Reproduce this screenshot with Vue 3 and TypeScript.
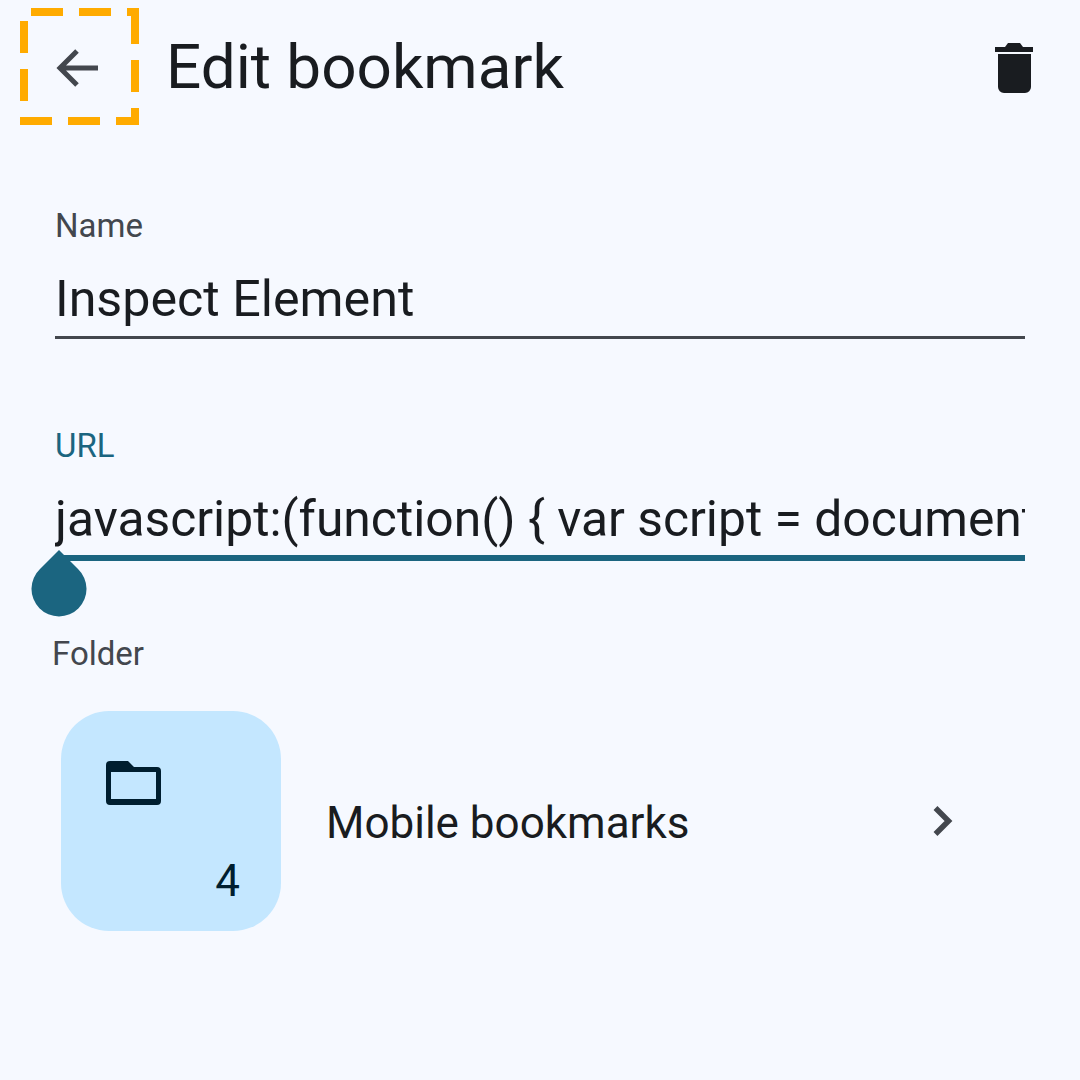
<script setup lang="ts">
const title: string = 'Edit bookmark'
</script>

<template>
  <div class="page">
    <header class="bar">
      <div class="back">
        <svg class="back-icon" viewBox="0 0 48 48" width="48" height="48">
          <path d="M45 24H9M24 7L7 24l17 17" fill="none" stroke="#43474e" stroke-width="5" />
        </svg>
        <svg class="dash" viewBox="0 0 119 117" width="119" height="117">
          <path d="M11 4h32M59 4h32M107 4h12M115 0v36M115 52v32M115 100v17M119 113H96M80 113H48M32 113H0M4 93V61M4 45V13" fill="none" stroke="#ffab00" stroke-width="8" />
        </svg>
      </div>
      <h1 class="title">{{ title }}</h1>
      <svg class="trash" viewBox="0 0 38 50" width="38" height="50">
        <path d="M0 9V4h10l3-4h12l3 4h10v5zM3 11h33v33a6 6 0 0 1-6 6H9a6 6 0 0 1-6-6z" fill="#191c20" />
      </svg>
    </header>

    <section class="field name-field">
      <label class="label">Name</label>
      <div class="value name-value underline">Inspect Element</div>
    </section>

    <section class="field url-field">
      <label class="label url-label">URL</label>
      <div class="value underline active">javascript:(function() { var script = document.createElement('script')</div>
      <svg class="handle" viewBox="0 0 56 67" width="56" height="67">
        <path d="M28 0L9 19A27.500 27.500 0 1 0 47 19z" fill="#1b6580" />
      </svg>
    </section>

    <section class="folder">
      <div class="label folder-label">Folder</div>
      <div class="folder-row">
        <div class="tile">
          <svg class="folder-icon" viewBox="0 0 55 44" width="55" height="44">
            <path fill-rule="evenodd" d="M4 0h18l6 6h23a4 4 0 0 1 4 4v30a4 4 0 0 1-4 4H4a4 4 0 0 1-4-4V4a4 4 0 0 1 4-4zM5 11v27h45V11z" fill="#001e2f" />
          </svg>
          <span class="count">4</span>
        </div>
        <span class="folder-name">Mobile bookmarks</span>
        <svg class="chev" viewBox="0 0 24 32" width="24" height="32">
          <path d="M3.500 3L16.500 16 3.500 29" fill="none" stroke="#43474e" stroke-width="5.500" />
        </svg>
      </div>
    </section>
  </div>
</template>

<style>
html, body { margin: 0; background: #f6f9ff; }
</style>

<style scoped>
.page {
  width: 1080px;
  height: 1080px;
  box-sizing: border-box;
  background: #f6f9ff;
  font-family: Roboto, sans-serif;
  color: #191c20;
  overflow: hidden;
}
.bar {
  display: flex;
  align-items: center;
  height: 134px;
  padding: 0 47px 0 20px;
}
.back {
  position: relative;
  width: 119px;
  height: 117px;
  margin-top: -1px;
  display: flex;
  align-items: center;
  justify-content: center;
  flex: none;
}
.back-icon { margin: 2px 5px 0 0; }
.dash { position: absolute; left: 0; top: 0; }
.title {
  margin: 0 0 0 27px;
  font-size: 62px;
  font-weight: 400;
  line-height: 68px;
  flex: 1;
}
.trash { flex: none; margin-top: 2px; }
.field {
  position: relative;
  margin: 0 55px;
}
.name-field { padding-top: 72px; }
.url-field { padding-top: 87px; }
.label {
  display: block;
  font-size: 33px;
  line-height: 40px;
  color: #43474e;
}
.url-label { color: #1b6580; }
.value {
  font-size: 49.800px;
  line-height: 60px;
  height: 93px;
  padding-top: 23px;
  box-sizing: border-box;
  white-space: nowrap;
  overflow: hidden;
}
.name-value { font-size: 50.200px; }
.underline { border-bottom: 3px solid #43474e; }
.active { height: 95px; border-bottom: 6px solid #1b6580; }
.handle { position: absolute; left: -24px; top: 211px; }
.folder { padding: 73px 0 0 52px; }
.folder-row {
  display: flex;
  align-items: center;
  margin-top: 37px;
  padding-left: 9px;
}
.tile {
  position: relative;
  width: 220px;
  height: 220px;
  border-radius: 48px;
  background: #c4e7ff;
  box-sizing: border-box;
  padding: 50px 0 0 45px;
  flex: none;
}
.folder-icon { display: block; }
.count {
  position: absolute;
  right: 41px;
  bottom: 26px;
  font-size: 44px;
  line-height: 48px;
  color: #001e2f;
}
.folder-name {
  margin-left: 45px;
  padding-top: 4px;
  font-size: 44px;
  flex: 0 0 auto;
  width: 606px;
}
.chev { flex: none; }
</style>
